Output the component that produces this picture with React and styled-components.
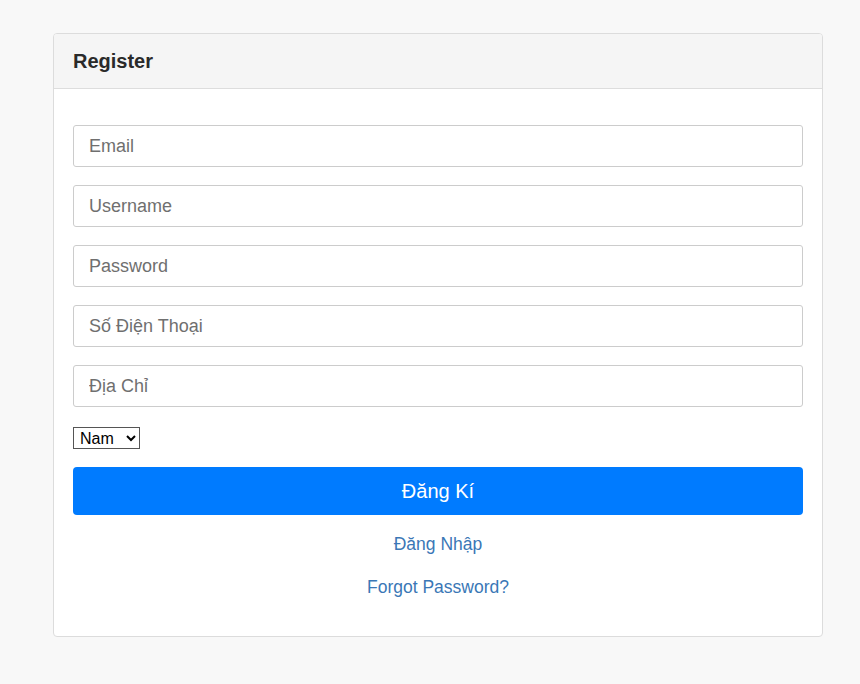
import React from "react";
import styled, { createGlobalStyle } from "styled-components";

const GlobalStyle = createGlobalStyle`
  html, body {
    margin: 0;
    background: #f8f8f8;
    font-family: "Liberation Sans", Arial, sans-serif;
  }
`;

const Page = styled.div`
  padding: 33px 37px 40px 53px;
`;

const Card = styled.div`
  background: #fff;
  border: 1px solid #dcdcdc;
  border-radius: 4px;
  overflow: hidden;
`;

const CardHeader = styled.div`
  height: 54px;
  background: #f5f5f5;
  border-bottom: 1px solid #dddddd;
  display: flex;
  align-items: center;
  padding: 0 19px;
  font-size: 20px;
  font-weight: bold;
  color: #2a2a2a;
`;

const Form = styled.form`
  padding: 36px 19px 38px;
  display: flex;
  flex-direction: column;
`;

const Input = styled.input`
  box-sizing: border-box;
  height: 42px;
  width: 100%;
  margin-bottom: 18px;
  padding: 0 15px;
  border: 1px solid #cccccc;
  border-radius: 3px;
  font-family: inherit;
  font-size: 18px;
  color: #333;
  outline: none;

  &::placeholder {
    color: #6f6f6f;
  }
`;

const Select = styled.select`
  align-self: flex-start;
  box-sizing: border-box;
  width: 67px;
  font-family: "Liberation Sans", Arial, sans-serif;
  font-size: 16px;
  height: 22px;
  padding: 0 2px;
  margin: 2px 0 18px;
  border: 1px solid #555;
  border-radius: 0;
  background: #fff;
  color: #000;
`;

const SubmitButton = styled.button`
  height: 48px;
  border: none;
  border-radius: 4px;
  background: #007bff;
  color: #fff;
  font-family: inherit;
  font-size: 20px;
  cursor: pointer;
`;

const LinkRow = styled.div`
  text-align: center;
  margin-top: ${(p) => p.$top}px;
`;

const Link = styled.a`
  color: #3a77b6;
  font-size: 17.5px;
  text-decoration: none;
`;

export default function App() {
  return (
    <>
      <GlobalStyle />
      <Page>
        <Card>
          <CardHeader>Register</CardHeader>
          <Form onSubmit={(e) => e.preventDefault()}>
            <Input type="email" placeholder="Email" />
            <Input type="text" placeholder="Username" />
            <Input type="password" placeholder="Password" />
            <Input type="text" placeholder="Số Điện Thoại" />
            <Input type="text" placeholder="Địa Chỉ" />
            <Select defaultValue="Nam">
              <option value="Nam">Nam</option>
              <option value="Nữ">Nữ</option>
            </Select>
            <SubmitButton type="submit">Đăng Kí</SubmitButton>
            <LinkRow $top={19}>
              <Link href="#">Đăng Nhập</Link>
            </LinkRow>
            <LinkRow $top={22}>
              <Link href="#">Forgot Password?</Link>
            </LinkRow>
          </Form>
        </Card>
      </Page>
    </>
  );
}
